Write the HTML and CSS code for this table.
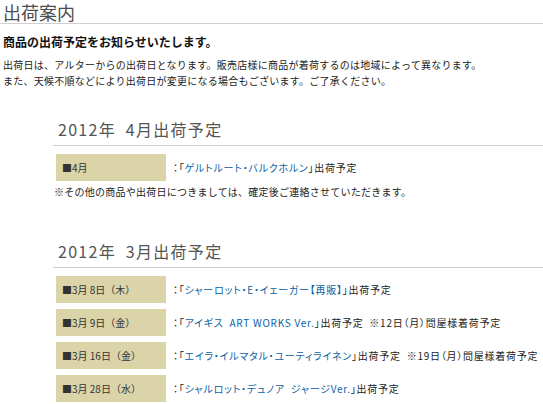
FILE: index.html
```html
<!DOCTYPE html>
<html lang="ja">
<head>
<meta charset="utf-8">
<link rel="stylesheet" href="styles.css">
</head>
<body>
<h1 class="page-title">出荷案内</h1>
<p class="lead">商品の出荷予定をお知らせいたします。</p>
<p class="intro">出荷日は、アルターからの出荷日となります。販売店様に商品が着荷するのは地域によって異なります。<br>また、天候不順などにより出荷日が変更になる場合もございます。ご了承ください。</p>

<section class="month first">
  <h2 class="month-title">2012年&nbsp; 4月出荷予定</h2>
  <ul class="schedule">
    <li class="row"><span class="date">■4月</span><span class="item">：「<a href="#">ゲルトルート・バルクホルン</a>」出荷予定</span></li>
  </ul>
  <p class="note">※その他の商品や出荷日につきましては、確定後ご連絡させていただきます。</p>
</section>

<section class="month second">
  <h2 class="month-title">2012年&nbsp; 3月出荷予定</h2>
  <ul class="schedule">
    <li class="row"><span class="date">■3月 8日（木）</span><span class="item">：「<a href="#">シャーロット・E・イェーガー【再販】</a>」出荷予定</span></li>
    <li class="row"><span class="date">■3月 9日（金）</span><span class="item">：「<a href="#">アイギス&nbsp; ART WORKS Ver.</a>」出荷予定&nbsp; ※12日（月）問屋様着荷予定</span></li>
    <li class="row"><span class="date">■3月 16日（金）</span><span class="item">：「<a href="#">エイラ・イルマタル・ユーティライネン</a>」出荷予定&nbsp; ※19日（月）問屋様着荷予定</span></li>
    <li class="row"><span class="date">■3月 28日（水）</span><span class="item">：「<a href="#">シャルロット・デュノア&nbsp; ジャージVer.</a>」出荷予定</span></li>
  </ul>
</section>
</body>
</html>
```

FILE: styles.css
```css
body {
  margin: 0;
  background: #fff;
  color: #222;
  font-family: "Noto Sans CJK JP", "Noto Sans", sans-serif;
}

.page-title {
  margin: 0;
  padding: 3px 3px 2px;
  font-size: 18px;
  line-height: 18px;
  font-weight: normal;
  color: #4d4d4d;
  border-bottom: 1px solid #cfcfcf;
}

.lead {
  margin: 9px 0 0;
  padding-left: 3px;
  font-size: 12px;
  line-height: 17px;
  font-weight: bold;
  color: #111;
}

.intro {
  margin: 7px 0 0;
  padding-left: 3px;
  font-size: 10px;
  line-height: 16px;
  letter-spacing: 0.25px;
  color: #222;
}

.month {
  margin-left: 53px;
}

.month.first {
  margin-top: 30px;
}

.month.second {
  margin-top: 41px;
}

.month-title {
  margin: 0;
  padding: 0 0 6px 5px;
  font-size: 16px;
  line-height: 20px;
  font-weight: normal;
  letter-spacing: 1.3px;
  color: #555;
  border-bottom: 1px solid #cfcfcf;
}

.schedule {
  list-style: none;
  margin: 8px 0 0 3px;
  padding: 0;
  display: flex;
  flex-direction: column;
  gap: 6px;
}

.row {
  display: flex;
  align-items: center;
  gap: 7px;
  font-size: 10px;
}

.date {
  width: 104px;
  height: 27px;
  padding-left: 6px;
  display: flex;
  align-items: center;
  background: #dbd4a8;
  color: #333;
  font-size: 10px;
}

.item {
  color: #222;
  font-feature-settings: "palt";
  letter-spacing: 0.75px;
}

.item a {
  color: #0b5fa5;
  text-decoration: none;
}

.note {
  margin: 3px 0 0 1px;
  font-size: 10px;
  line-height: 16px;
  letter-spacing: 0.25px;
  color: #222;
}
```
